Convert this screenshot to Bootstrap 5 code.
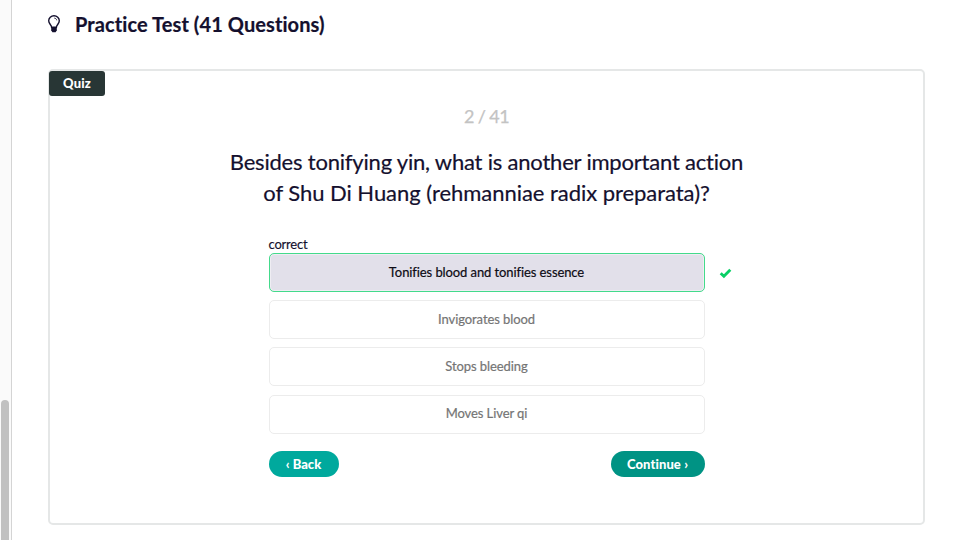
<!DOCTYPE html>
<html lang="en">
<head>
<meta charset="utf-8">
<meta name="viewport" content="width=device-width, initial-scale=1">
<title>Practice Test</title>
<link href="https://cdn.jsdelivr.net/npm/bootstrap@5.3.0/dist/css/bootstrap.min.css" rel="stylesheet">
<style>
body{font-family:Lato,"Liberation Sans",sans-serif;color:#14102e;background:#fff;height:540px;overflow:hidden;font-variant-ligatures:none}
.scroll-rail{width:12px;background:#fafafa;border-right:1px solid #d4d4d4;padding:400px 0 0 1px}
.scroll-thumb{width:8px;height:160px;background:#c1c1c1;border-radius:4px}
.page-main{padding:10px 35px 15px 36px}
.page-title{font-size:20px;line-height:28px;font-weight:700;height:28px}
.page-title span{margin-left:15px;letter-spacing:.09px;-webkit-text-stroke:.2px}
.quiz-panel{height:456px;margin-top:31px;border:2px solid #e5e7e7;border-radius:5px}
.quiz-tag{left:-1px;top:0;width:56px;height:25px;background:#283635;color:#fff;font-size:13px;font-weight:900;border-radius:3px;letter-spacing:.2px}
.counter{font-size:18px;line-height:24px;color:#c3c3c3;margin-top:33px;letter-spacing:-.9px;-webkit-text-stroke:.25px}
.counter span{font-size:18px;letter-spacing:-.6px}
.question{font-size:22px;line-height:31px;font-weight:400;margin-top:18px;-webkit-text-stroke:.2px}
.line-first{letter-spacing:-.2px}
.line-second{letter-spacing:-.04px}
.answers{width:436px;margin-top:27px;font-size:13px}
.verdict{line-height:18px;height:18px;letter-spacing:-.2px;-webkit-text-stroke:.15px}
.choices{gap:8.2px}
.choice{height:39px;border:1.5px solid #ececec;border-radius:5px;color:#757575;background:#fff;font-size:13px;padding:0;letter-spacing:-.08px;-webkit-text-stroke:.2px}
.choice-correct{border-color:#43da8b;background:#e2e0ea;color:#0d0b14;box-shadow:inset 0 0 0 1px #efedf3;letter-spacing:-.09px}
.tick{left:450px;top:14px}
.pill{height:26px;border:0;border-radius:13px;color:#fff;font-size:13px;font-weight:900;padding:0;line-height:26px}
.pill-back{width:70px;background:#00a99d}
.pill-next{width:94px;background:#009384;letter-spacing:.1px}
.actions{margin-top:17px}
</style>
</head>
<body class="d-flex">
<div class="scroll-rail flex-shrink-0"><div class="scroll-thumb"></div></div>
<main class="page-main flex-grow-1">
  <h1 class="page-title d-flex align-items-center m-0">
    <svg width="12" height="18" viewBox="0 0 12 18" fill="none" stroke="#14102e"><path d="M3.6 12.2C3.6 9.9.7 8.8.7 5.8a5.3 5 0 0 1 10.6 0c0 3-2.9 4.1-2.9 6.4z" stroke-width="1.4"/><path d="M6.3 3.1c1.3.1 2.2.9 2.4 2.2" stroke-width=".9"/><path d="M3.2 12h5.6v3.2L7.6 17.3H4.4L3.2 15.2z" fill="#14102e" stroke="none"/></svg>
    <span>Practice Test (41 Questions)</span>
  </h1>
  <section class="quiz-panel position-relative d-flex flex-column align-items-center">
    <div class="quiz-tag position-absolute d-flex align-items-center justify-content-center">Quiz</div>
    <div class="counter"><span>2 / 41</span></div>
    <h2 class="question text-center mb-0"><span class="line-first">Besides tonifying yin, what is another important action</span><br><span class="line-second">of Shu Di Huang (rehmanniae radix preparata)?</span></h2>
    <div class="answers">
      <div class="verdict">correct</div>
      <div class="choices d-flex flex-column">
        <div class="position-relative d-flex">
          <button class="choice choice-correct btn w-100">Tonifies blood and tonifies essence</button>
          <svg class="tick position-absolute" width="13" height="12" viewBox="0 0 13 12"><path d="M1.7 6.2 4.9 9.2 11.3 2.8" fill="none" stroke="#08cf65" stroke-width="2.9"/></svg>
        </div>
        <button class="choice btn w-100">Invigorates blood</button>
        <button class="choice btn w-100">Stops bleeding</button>
        <button class="choice btn w-100">Moves Liver qi</button>
      </div>
      <div class="actions d-flex justify-content-between">
        <button class="pill pill-back btn">‹ Back</button>
        <button class="pill pill-next btn">Continue ›</button>
      </div>
    </div>
  </section>
</main>
<script src="https://cdn.jsdelivr.net/npm/bootstrap@5.3.0/dist/js/bootstrap.bundle.min.js"></script>
</body>
</html>
